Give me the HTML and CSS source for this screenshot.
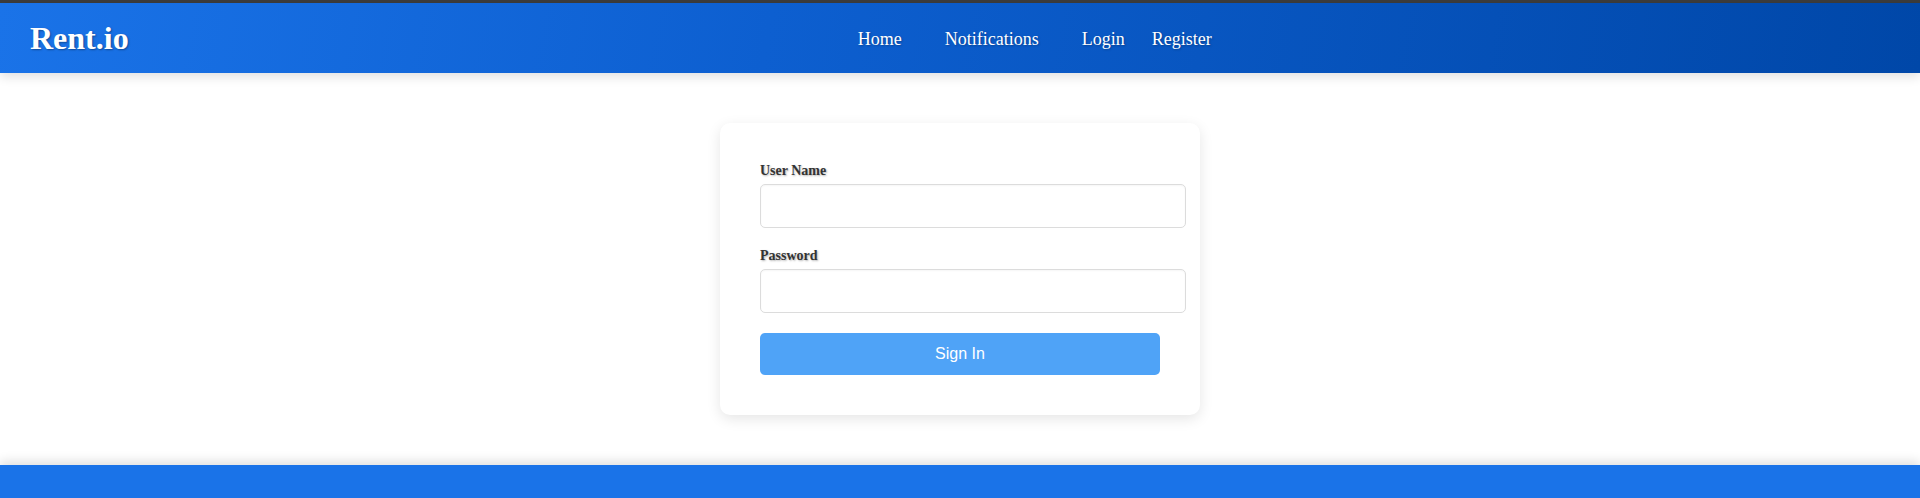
FILE: index.html
```html
<!DOCTYPE html>
<html lang="en">
<head>
<meta charset="utf-8">
<title>Rent.io</title>
<link rel="stylesheet" href="styles.css">
</head>
<body>
<div class="topline"></div>
<header class="header">
  <div class="logo">Rent.io</div>
  <nav class="nav">
    <a class="nav-link home" href="#">Home</a>
    <a class="nav-link notif" href="#">Notifications</a>
    <a class="nav-link login" href="#">Login</a>
    <a class="nav-link" href="#">Register</a>
  </nav>
</header>
<main class="main">
  <form class="card">
    <label class="label" for="user">User Name</label>
    <input class="input" id="user" type="text">
    <label class="label" for="pass">Password</label>
    <input class="input" id="pass" type="password">
    <button class="btn" type="button">Sign In</button>
  </form>
</main>
<footer class="footer"></footer>
</body>
</html>
```

FILE: styles.css
```css
html, body {
  margin: 0;
  padding: 0;
  background: #ffffff;
  font-family: "Liberation Serif", "Times New Roman", serif;
  overflow: hidden;
}

.topline {
  height: 3px;
  background: #3c3c3c;
}

.header {
  height: 70px;
  display: flex;
  align-items: center;
  padding: 0 30px;
  background: linear-gradient(100deg, #1a73e8 0%, #0d5fd0 40%, #0047a8 100%);
  box-shadow: 0 4px 10px rgba(0, 0, 0, 0.12);
  position: relative;
  z-index: 2;
}

.logo {
  color: #ffffff;
  font-size: 32px;
  font-weight: bold;
  text-shadow: 1px 1px 2px rgba(0, 0, 0, 0.35);
  line-height: 1;
}

.nav {
  display: flex;
  align-items: center;
  margin-left: 729px;
  padding-top: 2px;
}

.nav-link {
  color: #ffffff;
  text-decoration: none;
  font-size: 18px;
  text-shadow: 1px 1px 2px rgba(0, 0, 0, 0.25);
}

.home { margin-right: 43px; }
.notif { margin-right: 43px; }
.login { margin-right: 27px; }

.main {
  display: flex;
  justify-content: center;
  padding: 50px 0;
}

.card {
  width: 400px;
  padding: 40px;
  background: #ffffff;
  border-radius: 10px;
  box-shadow: 0 4px 14px rgba(0, 0, 0, 0.1);
  display: flex;
  flex-direction: column;
  align-items: flex-start;
}

.label {
  display: block;
  font-size: 14px;
  font-weight: bold;
  color: #333333;
  line-height: 16px;
  margin-bottom: 5px;
  text-shadow: 1px 1px 2px rgba(0, 0, 0, 0.3);
}

.input {
  box-sizing: content-box;
  width: 100%;
  height: 18px;
  padding: 12px;
  border: 1px solid #dcdcdc;
  border-radius: 5px;
  font-size: 16px;
  margin: 0 0 20px 0;
  box-shadow: inset 0 1px 2px rgba(0, 0, 0, 0.04);
  background: #ffffff;
}

.btn {
  width: 400px;
  height: 42px;
  border: none;
  border-radius: 5px;
  background: #4fa3f7;
  color: #ffffff;
  font-family: "Liberation Sans", Arial, sans-serif;
  font-size: 16px;
  padding: 0;
}

.footer {
  height: 40px;
  background: #1a73e8;
  box-shadow: 0 -4px 10px rgba(0, 0, 0, 0.12);
}
```
